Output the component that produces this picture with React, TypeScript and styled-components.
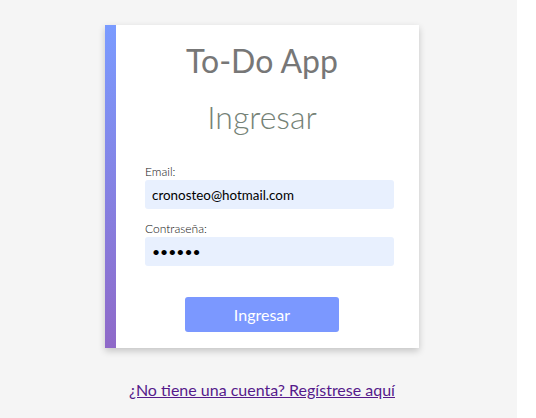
import React from "react";
import styled, { createGlobalStyle } from "styled-components";

const Global = createGlobalStyle`
  html, body { margin: 0; padding: 0; background: #ffffff; }
  body { font-family: Lato, "Liberation Sans", sans-serif; }
`;

const Page = styled.div`
  width: 517px;
  min-height: 418px;
  background: #f5f5f5;
  padding-top: 25px;
  box-sizing: border-box;
  display: flex;
  flex-direction: column;
`;

const Card = styled.div`
  width: 314px;
  margin-left: 105px;
  box-sizing: border-box;
  padding: 14px 0 16px;
  background:
    linear-gradient(180deg, #7a9bff 0%, #8f69c8 100%) left top / 11px 100% no-repeat,
    #ffffff;
  box-shadow: 0 3px 7px rgba(0, 0, 0, 0.2);
  display: flex;
  flex-direction: column;
  align-items: center;
`;

const Title = styled.h1`
  margin: 0;
  font-family: Lato, sans-serif;
  font-weight: 400;
  font-size: 32px;
  line-height: 44px;
  color: #777777;
`;

const Subtitle = styled.h2`
  margin: 14px 0 0;
  font-family: Lato, sans-serif;
  font-weight: 300;
  font-size: 32px;
  line-height: 40px;
  color: #758276;
`;

const Form = styled.form`
  width: 249px;
  margin: 27px 0 0 15px;
  display: flex;
  flex-direction: column;
`;

const Field = styled.div<{ $gap?: number }>`
  display: flex;
  flex-direction: column;
  margin-top: ${(p) => p.$gap ?? 0}px;
`;

const Label = styled.label`
  font-family: Lato, sans-serif;
  font-weight: 300;
  font-size: 12px;
  line-height: 15px;
  color: #111111;
  margin-bottom: 1px;
`;

const Input = styled.input<{ $dots?: boolean }>`
  height: 29px;
  box-sizing: border-box;
  border: none;
  border-radius: 3px;
  background: #e8f0fe;
  padding: 0 7px;
  font-family: Lato, sans-serif;
  font-size: ${(p) => (p.$dots ? "14px" : "13.4px")};
  color: #000000;
  outline: none;
`;

const ButtonRow = styled.div`
  display: flex;
  justify-content: center;
  margin-top: 31px;
  padding-right: 15px;
`;

const Button = styled.button`
  width: 154px;
  height: 35px;
  border: none;
  border-radius: 3px;
  background: #7b98ff;
  color: #ffffff;
  font-family: Lato, sans-serif;
  font-size: 16px;
  cursor: pointer;
`;

const Footer = styled.div`
  width: 314px;
  margin: 32px 0 0 105px;
  text-align: center;
`;

const Link = styled.a`
  font-family: Lato, sans-serif;
  font-size: 16px;
  line-height: 19px;
  color: #551a8b;
  text-decoration: underline;
`;

export default function App() {
  return (
    <>
      <Global />
      <Page>
        <Card>
          <Title>To-Do App</Title>
          <Subtitle>Ingresar</Subtitle>
          <Form onSubmit={(e) => e.preventDefault()}>
            <Field>
              <Label htmlFor="email">Email:</Label>
              <Input id="email" type="email" defaultValue="cronosteo@hotmail.com" readOnly />
            </Field>
            <Field $gap={12}>
              <Label htmlFor="pass">Contraseña:</Label>
              <Input id="pass" type="password" defaultValue="123456" readOnly $dots />
            </Field>
            <ButtonRow>
              <Button type="submit">Ingresar</Button>
            </ButtonRow>
          </Form>
        </Card>
        <Footer>
          <Link href="#registro">¿No tiene una cuenta? Regístrese aquí</Link>
        </Footer>
      </Page>
    </>
  );
}
